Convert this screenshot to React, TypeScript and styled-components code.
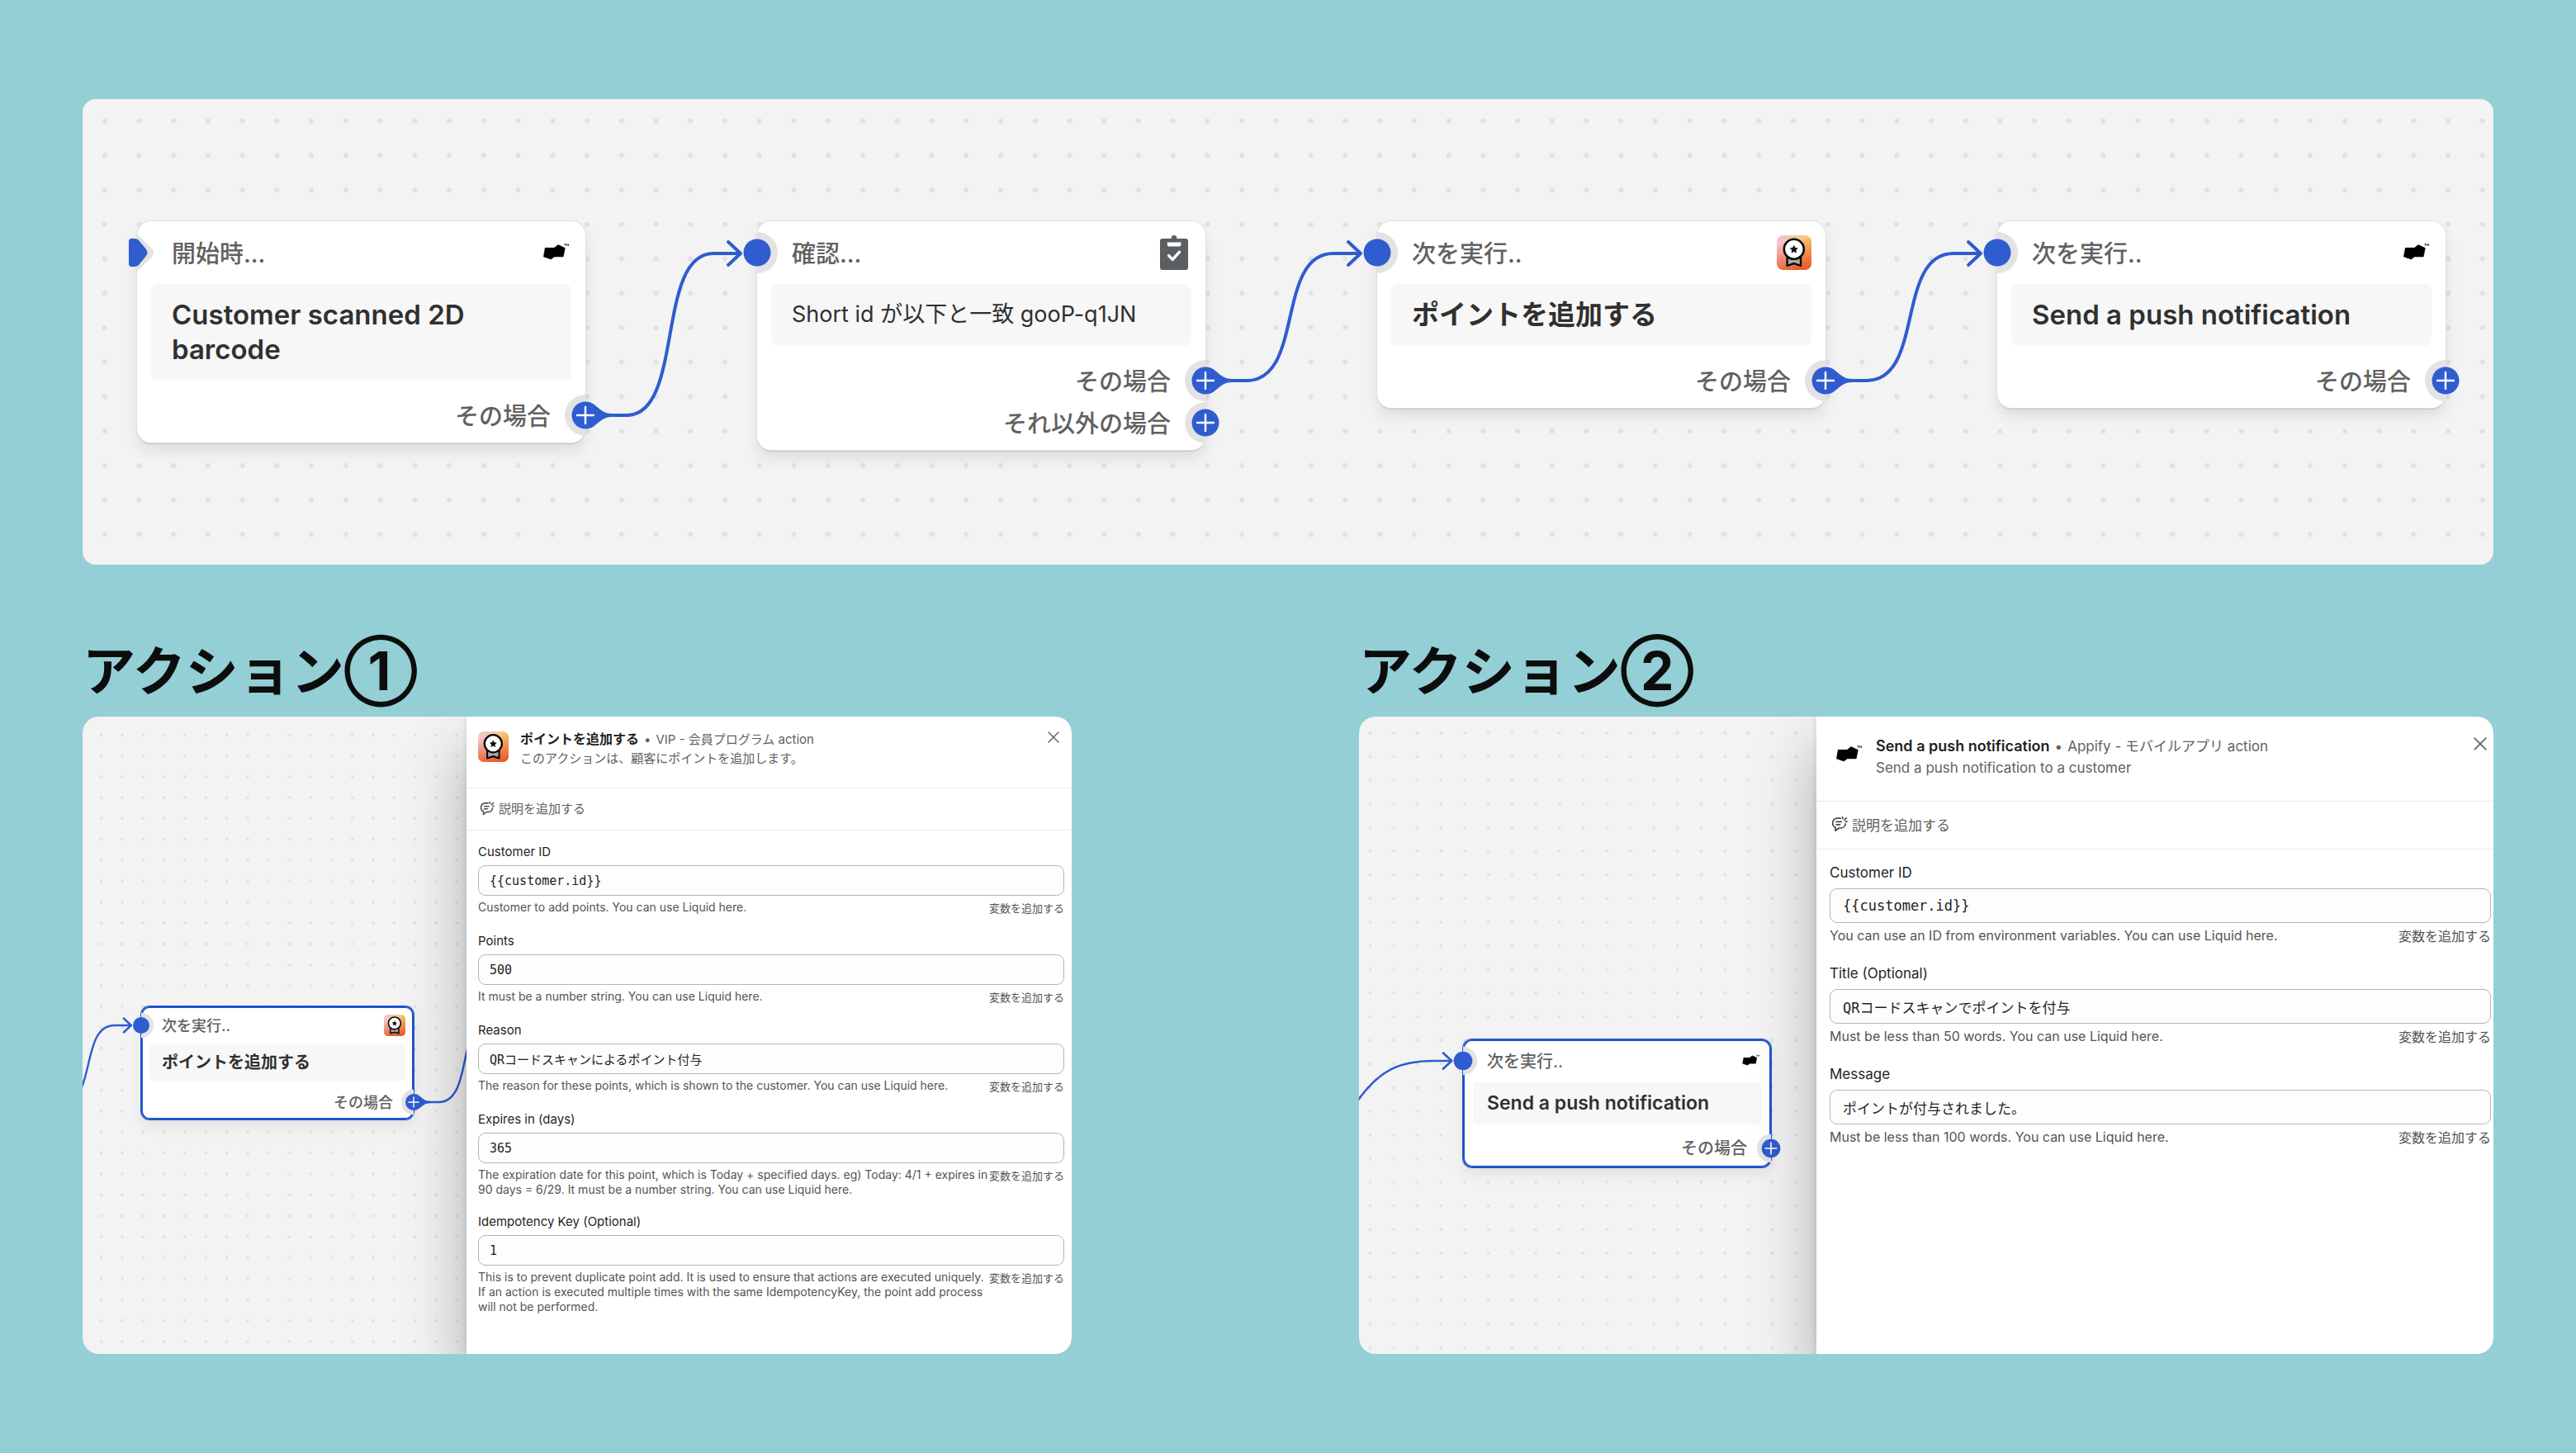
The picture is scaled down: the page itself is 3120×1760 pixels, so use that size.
import React, { useId } from 'react';
import styled, { createGlobalStyle, css } from 'styled-components';

const sans = `Inter, "Noto Sans CJK JP", sans-serif`;
const mono = `"DejaVu Sans Mono", "Noto Sans CJK JP", monospace`;

const color = {
  page: '#93cfd5',
  canvas: '#f3f3f3',
  dot: '#e1e1e1',
  blue: '#2f5ccf',
  selected: '#2253cf',
  ink: '#1f1f1f',
  title: '#303030',
  text: '#616161',
  help: '#545454',
  rule: '#ebebeb',
};

const GlobalStyle = createGlobalStyle`
  *, *::before, *::after { box-sizing: border-box; }
  body { margin: 0; background: ${color.page}; font-family: ${sans}; }
  button { margin: 0; padding: 0; border: 0; background: none; font: inherit; color: inherit; cursor: pointer; }
  h1, h2, h3, p { margin: 0; font-weight: inherit; font-size: inherit; }
  svg { display: block; }
`;

/* ---------- page ---------- */

const Page = styled.main`
  display: flex;
  flex-direction: column;
  min-height: 100vh;
  padding: 120px 100px;
`;

const Canvas = styled.div`
  position: relative;
  overflow: hidden;
  background: ${color.canvas};
`;

const FlowPanel = styled(Canvas).attrs({ as: 'section' })`
  border-radius: 16px;
`;

const FlowRow = styled.div`
  position: relative;
  display: grid;
  grid-template-columns: repeat(4, 1fr);
  align-items: start;
  gap: 208px;
  padding: 148px 58px 139px 66px;
`;

const Actions = styled.div`
  flex: 1;
  display: grid;
  grid-template-columns: 1198fr 1374fr;
  column-gap: 348px;
  margin-top: 85px;
`;

const Action = styled.section`
  display: flex;
  flex-direction: column;
`;

const Heading = styled.h2`
  padding-bottom: 11px;
  font-size: 64px;
  line-height: 88px;
  font-weight: 700;
  color: #0d0d0d;
`;

const Panel = styled.div<{ $columns: string }>`
  flex: 1;
  display: grid;
  grid-template-columns: ${(p) => p.$columns};
  border-radius: 20px;
  overflow: hidden;
`;

/* ---------- dotted canvas ---------- */

const GridSvg = styled.svg`
  position: absolute;
  inset: 0;
  width: 100%;
  height: 100%;
`;

function DotGrid({ zoom, x, y }: { zoom: number; x: number; y: number }) {
  const id = useId();
  const gap = 20 * zoom;
  return (
    <GridSvg aria-hidden="true">
      <pattern id={id} x={x - gap / 2} y={y - gap / 2} width={gap} height={gap} patternUnits="userSpaceOnUse">
        <circle cx={gap / 2} cy={gap / 2} r={1.45 * zoom} fill={color.dot} />
      </pattern>
      <rect width="100%" height="100%" fill={`url(#${id})`} />
    </GridSvg>
  );
}

/* ---------- icons ---------- */

function AppifyIcon({ size }: { size: number }) {
  return (
    <svg width={size} height={size} viewBox="0 0 42 42" aria-hidden="true">
      <path
        d="M10.3 15.3H21.2L26 11.6L34.3 15.4L32.2 25.9H21.4L17.3 28.9L8.4 25.9Z"
        fill="#000"
        stroke="#000"
        strokeWidth=".6"
        strokeLinejoin="round"
      />
      <path d="M33.4 10.6h2.4M34.6 10.6v2.4M36.6 13v-2.4l1 1.4 1-1.4v2.4" fill="none" stroke="#222" strokeWidth=".8" />
    </svg>
  );
}

function BadgeIcon({ size }: { size: number }) {
  const id = useId();
  return (
    <svg width={size} height={size} viewBox="0 0 42 42" aria-hidden="true">
      <defs>
        <linearGradient id={`${id}a`} x1="0" y1="0" x2="1" y2="0">
          <stop offset="0" stopColor="#f4c3d3" />
          <stop offset=".55" stopColor="#f5c9a0" />
          <stop offset="1" stopColor="#f6c766" />
        </linearGradient>
        <linearGradient id={`${id}b`} x1=".35" y1="0" x2=".6" y2="1">
          <stop offset=".15" stopColor="#ea5a2a" stopOpacity="0" />
          <stop offset="1" stopColor="#ea5a2a" />
        </linearGradient>
      </defs>
      <rect width="42" height="42" rx="8" fill={`url(#${id}a)`} />
      <rect width="42" height="42" rx="8" fill={`url(#${id}b)`} />
      <path d="M12.6 24V36.8L20.8 34.2L29 36.8V24Z" fill="#a9a9a9" stroke="#0a0a0a" strokeWidth="2.4" strokeLinejoin="round" />
      <circle cx="20.8" cy="16.8" r="12" fill="#fff" stroke="#0a0a0a" strokeWidth="2.6" />
      <path
        d="M20.8 12.4l1.4 2.9 3.1.4-2.3 2.2.6 3.2-2.8-1.5-2.8 1.5.6-3.2-2.3-2.2 3.1-.4z"
        fill="#0a0a0a"
        stroke="#0a0a0a"
        strokeWidth=".6"
        strokeLinejoin="round"
      />
    </svg>
  );
}

function ClipboardIcon({ size }: { size: number }) {
  return (
    <svg width={size} height={size} viewBox="0 0 42 42" aria-hidden="true">
      <circle cx="21" cy="3.4" r="3.3" fill="#5c5f62" />
      <rect x="4" y="4" width="34" height="38" rx="3" fill="#5c5f62" />
      <path d="M12.8 8.4H29.4V11.4Q29.4 13.4 27.4 13.4H14.8Q12.8 13.4 12.8 11.4Z" fill="#fff" />
      <path d="M14.6 24.6L19.2 29.4L27.6 20.2" fill="none" stroke="#fff" strokeWidth="3.4" strokeLinecap="round" strokeLinejoin="round" />
    </svg>
  );
}

function NoteIcon({ size }: { size: number }) {
  return (
    <svg
      width={size}
      height={size}
      viewBox="0 0 20 20"
      fill="none"
      stroke="#4a4a4a"
      strokeWidth="1.7"
      strokeLinecap="round"
      strokeLinejoin="round"
      aria-hidden="true"
    >
      <path d="M11.2 3.2H7.2A5.8 5.8 0 0 0 5 14.2V18.2L9.2 15H11.6A5.8 5.8 0 0 0 17.3 9.8" />
      <path d="M6.2 7.4H12.2M6.2 10.8H10.4" />
      <path d="M14 3.6L13.6 1.8M16 5.2L18.4 2.8M17.4 7.2H19" />
    </svg>
  );
}

function CloseIcon({ size }: { size: number }) {
  return (
    <svg width={size} height={size} viewBox="0 0 14 14" fill="none" stroke="#5c5f62" strokeWidth="1.4" strokeLinecap="round" aria-hidden="true">
      <path d="M1 1L13 13M13 1L1 13" />
    </svg>
  );
}

/* ---------- flow node ---------- */

type Size = 'lg' | 'md' | 'sm';

const nodeSize = {
  lg: { unit: 1, pad: 17, icon: 42, indent: 25, title: 33, body: 27, label: 29, line: 42, boxTop: 16, boxBottom: 17, row: 51, end: 8, radius: 17, boxRadius: 8 },
  md: { unit: 0.686, pad: 12, icon: 28, indent: 17, title: 23, body: 18, label: 20, line: 29, boxTop: 11, boxBottom: 11, row: 35, end: 6, radius: 11, boxRadius: 5 },
  sm: { unit: 0.607, pad: 10, icon: 26, indent: 15, title: 20, body: 16, label: 18, line: 25, boxTop: 10, boxBottom: 10, row: 31, end: 6, radius: 10, boxRadius: 5 },
};

const Card = styled.article<{ $size: Size; $selected?: boolean }>`
  position: relative;
  padding: ${(p) => nodeSize[p.$size].pad}px;
  padding-bottom: ${(p) => nodeSize[p.$size].end}px;
  border-radius: ${(p) => nodeSize[p.$size].radius}px;
  background: #fff;
  box-shadow: ${(p) =>
    p.$selected
      ? `inset 0 0 0 2px ${color.selected}, 0 0 0 1px ${color.selected}, 0 8px 16px rgba(0, 0, 0, 0.08)`
      : '0 0 0 1px #e0e0e0, 0 2px 1px rgba(0, 0, 0, 0.14), 0 10px 18px rgba(0, 0, 0, 0.09)'};
`;

const CardHeader = styled.header<{ $size: Size }>`
  position: relative;
  display: flex;
  align-items: center;
  justify-content: space-between;
  height: ${(p) => nodeSize[p.$size].icon}px;
  padding-left: ${(p) => nodeSize[p.$size].indent}px;
  font-size: ${(p) => nodeSize[p.$size].label}px;
  font-weight: 500;
  color: ${color.text};
`;

const Caption = styled.span`
  padding-bottom: 2px;
`;

const CardBox = styled.div<{ $size: Size; $plain?: boolean }>`
  margin: ${(p) => nodeSize[p.$size].pad}px 0 ${(p) => nodeSize[p.$size].pad - 1}px;
  padding: ${(p) => {
    const s = nodeSize[p.$size];
    return `${s.boxTop}px ${s.indent}px ${s.boxBottom}px`;
  }};
  border-radius: ${(p) => nodeSize[p.$size].boxRadius}px;
  background: #f7f7f7;
  line-height: ${(p) => nodeSize[p.$size].line}px;
  color: ${color.title};
  ${(p) =>
    p.$plain
      ? css`
          font-size: ${nodeSize[p.$size].body}px;
          font-weight: 400;
        `
      : css`
          font-size: ${nodeSize[p.$size].title}px;
          font-weight: 600;
        `}
`;

const OutputRow = styled.div<{ $size: Size }>`
  position: relative;
  display: flex;
  align-items: center;
  justify-content: flex-end;
  height: ${(p) => nodeSize[p.$size].row}px;
  padding-right: ${(p) => nodeSize[p.$size].indent}px;
  font-size: ${(p) => nodeSize[p.$size].label}px;
  font-weight: 500;
  color: ${color.text};
`;

/* Ports sit on the card's edge, centred on their row. */
const PortAnchor = styled.span<{ $size: Size; $side: 'left' | 'right' }>`
  position: absolute;
  top: 50%;
  ${(p) => p.$side}: -${(p) => nodeSize[p.$size].pad}px;
  width: 0;
  height: 0;
  svg {
    position: absolute;
    left: 0;
    top: 0;
    overflow: visible;
  }
`;

const PlusButton = styled.button`
  position: absolute;
  left: 0;
  top: 0;
`;

function Curve({ rise, tail }: { rise: number; tail?: boolean }) {
  return (
    <g stroke={color.blue} strokeWidth="4" fill="none" strokeLinecap="round" strokeLinejoin="round">
      {tail && <path d="M4 -16C14 -14 18 -2 32 -2V2C18 2 14 14 4 16Z" fill={color.blue} stroke="none" />}
      <path d={`M20 0H50C120 0 85 ${-rise} 155 ${-rise}H187`} />
      <path d={`M173 ${-rise - 14}L188 ${-rise}L173 ${-rise + 14}`} />
    </g>
  );
}

function InputPort({ size, start, lead }: { size: Size; start?: boolean; lead?: React.ReactNode }) {
  const { unit } = nodeSize[size];
  return (
    <PortAnchor $size={size} $side="left">
      <svg width="1" height="1" aria-hidden="true">
        <g transform={`scale(${unit})`}>
          {lead}
          {start ? (
            <>
              <path d="M-1 -24L18 -5Q22 0 18 5L-1 24Z" fill="#e3e3e3" />
              <path d="M-7 -17H-3Q0 -17 2 -15L11 -4Q14 0 11 4L2 15Q0 17 -3 17H-7Q-10 17 -10 13V-13Q-10 -17 -7 -17Z" fill={color.blue} />
            </>
          ) : (
            <>
              <path d="M0 -25A25 25 0 0 1 0 25Z" fill="#e3e3e3" />
              <circle r="16.5" fill={color.blue} />
            </>
          )}
        </g>
      </svg>
    </PortAnchor>
  );
}

function OutputPort({ size, label, rise }: { size: Size; label: string; rise?: number }) {
  const { unit } = nodeSize[size];
  return (
    <PortAnchor $size={size} $side="right">
      <PlusButton type="button" aria-label={label}>
        <svg width="1" height="1" aria-hidden="true">
          <g transform={`scale(${unit})`}>
            <path d="M0 -25A25 25 0 0 0 0 25Z" fill="#e3e3e3" />
            {rise !== undefined && <Curve rise={rise} tail />}
            <circle r="16.5" fill={color.blue} />
            <path d="M-10 0H10M0 -10V10" stroke="#fff" strokeWidth="2.4" strokeLinecap="round" />
          </g>
        </svg>
      </PlusButton>
    </PortAnchor>
  );
}

type NodeProps = {
  size: Size;
  step: string;
  title: string;
  icon: React.ReactNode;
  outputs: { label: string; rise?: number }[];
  plain?: boolean;
  start?: boolean;
  selected?: boolean;
  lead?: React.ReactNode;
};

function FlowNode({ size, step, title, icon, outputs, plain, start, selected, lead }: NodeProps) {
  return (
    <Card $size={size} $selected={selected}>
      <CardHeader $size={size}>
        <InputPort size={size} start={start} lead={lead} />
        <Caption>{step}</Caption>
        {icon}
      </CardHeader>
      <CardBox $size={size} $plain={plain}>
        {title}
      </CardBox>
      {outputs.map((o) => (
        <OutputRow key={o.label} $size={size}>
          <Caption>{o.label}</Caption>
          <OutputPort size={size} label={o.label} rise={o.rise} />
        </OutputRow>
      ))}
    </Card>
  );
}

/* ---------- drawer ---------- */

type Density = 'compact' | 'roomy';

const drawerSize = {
  compact: { top: 16, bottom: 24, left: 14, closeRight: 15, title: 16, meta: 15, line: 23, note: 51, noteIcon: 18, bodyTop: 16, bodyRight: 9, label: 15, labelLine: 20, labelGap: 6, input: 37, inset: 13, mono: 15, helpGap: 5, help: 14, helpLine: 18, link: 13, linkLine: 20, fieldGap: 20, close: 14 },
  roomy: { top: 23, bottom: 27, left: 16, closeRight: 8, title: 18, meta: 17, line: 26, note: 58, noteIcon: 20, bodyTop: 17, bodyRight: 3, label: 17, labelLine: 23, labelGap: 7, input: 42, inset: 15, mono: 17, helpGap: 5, help: 16, helpLine: 20, link: 16, linkLine: 22, fieldGap: 23, close: 16 },
};

type D = { $d: Density };

const Drawer = styled.aside`
  position: relative;
  padding-bottom: 40px;
  background: #fff;
  box-shadow: 0 0 6px rgba(0, 0, 0, 0.12), 0 40px 70px rgba(0, 0, 0, 0.3);
`;

const DrawerHeader = styled.header<D>`
  display: flex;
  align-items: flex-start;
  gap: 14px;
  padding: ${(p) => {
    const s = drawerSize[p.$d];
    return `${s.top}px ${s.closeRight}px ${s.bottom}px ${s.left}px`;
  }};
  border-bottom: 1px solid ${color.rule};
  > svg {
    margin-top: 2px;
  }
`;

const DrawerTitles = styled.div<D>`
  flex: 1;
  font-size: ${(p) => drawerSize[p.$d].meta}px;
  line-height: ${(p) => drawerSize[p.$d].line}px;
  color: ${color.text};
`;

const DrawerTitle = styled.h3<D>`
  display: inline;
  font-size: ${(p) => drawerSize[p.$d].title}px;
  font-weight: 600;
  color: ${color.ink};
`;

const Bullet = styled.span`
  margin: 0 6px;
`;

const CloseButton = styled.button`
  margin-top: 2px;
`;

const NoteRow = styled.button<D>`
  display: flex;
  align-items: center;
  gap: 5px;
  width: 100%;
  height: ${(p) => drawerSize[p.$d].note}px;
  padding: 0 0 3px ${(p) => drawerSize[p.$d].left + 2}px;
  border-bottom: 1px solid ${color.rule};
  font-size: ${(p) => drawerSize[p.$d].label}px;
  color: ${color.text};
`;

const Form = styled.form<D>`
  display: flex;
  flex-direction: column;
  gap: ${(p) => drawerSize[p.$d].fieldGap}px;
  padding: ${(p) => {
    const s = drawerSize[p.$d];
    return `${s.bodyTop}px ${s.bodyRight}px 0 ${s.left}px`;
  }};
`;

const Label = styled.label<D>`
  display: block;
  margin-bottom: ${(p) => drawerSize[p.$d].labelGap}px;
  font-size: ${(p) => drawerSize[p.$d].label}px;
  line-height: ${(p) => drawerSize[p.$d].labelLine}px;
  color: ${color.ink};
`;

const Input = styled.input<D>`
  display: block;
  width: 100%;
  height: ${(p) => drawerSize[p.$d].input}px;
  padding: 0 ${(p) => drawerSize[p.$d].inset}px;
  border: 1px solid #b5b5b5;
  border-radius: 9px;
  background: #fdfdfd;
  font-family: ${mono};
  font-size: ${(p) => drawerSize[p.$d].mono}px;
  color: ${color.ink};
`;

const HelpRow = styled.div<D>`
  display: flex;
  align-items: flex-start;
  justify-content: space-between;
  margin-top: ${(p) => drawerSize[p.$d].helpGap}px;
  font-size: ${(p) => drawerSize[p.$d].help}px;
  line-height: ${(p) => drawerSize[p.$d].helpLine}px;
  color: ${color.help};
`;

const HelpText = styled.p`
  flex: 1;
  margin-right: -2px;
`;

const VariableButton = styled.button<D>`
  flex: none;
  font-size: ${(p) => drawerSize[p.$d].link}px;
  line-height: ${(p) => drawerSize[p.$d].linkLine}px;
`;

type FieldData = { label: string; value: string; help: string };

function Field({ d, field }: { d: Density; field: FieldData }) {
  const id = useId();
  return (
    <div>
      <Label $d={d} htmlFor={id}>
        {field.label}
      </Label>
      <Input $d={d} id={id} type="text" defaultValue={field.value} aria-describedby={`${id}-help`} />
      <HelpRow $d={d}>
        <HelpText id={`${id}-help`}>{field.help}</HelpText>
        <VariableButton $d={d} type="button">
          変数を追加する
        </VariableButton>
      </HelpRow>
    </div>
  );
}

type ActionDrawerProps = {
  d: Density;
  icon: React.ReactNode;
  title: string;
  app: string;
  description: string;
  fields: FieldData[];
};

function ActionDrawer({ d, icon, title, app, description, fields }: ActionDrawerProps) {
  const s = drawerSize[d];
  return (
    <Drawer>
      <DrawerHeader $d={d}>
        {icon}
        <DrawerTitles $d={d}>
          <div>
            <DrawerTitle $d={d}>{title}</DrawerTitle>
            <Bullet>•</Bullet>
            {app}
          </div>
          <p>{description}</p>
        </DrawerTitles>
        <CloseButton type="button" aria-label="閉じる">
          <CloseIcon size={s.close} />
        </CloseButton>
      </DrawerHeader>
      <NoteRow $d={d} type="button">
        <NoteIcon size={s.noteIcon} />
        説明を追加する
      </NoteRow>
      <Form $d={d}>
        {fields.map((f) => (
          <Field key={f.label} d={d} field={f} />
        ))}
      </Form>
    </Drawer>
  );
}

const CanvasNode = styled.div<{ $left: number; $top: number; $width: number }>`
  position: absolute;
  left: ${(p) => p.$left}px;
  top: ${(p) => p.$top}px;
  width: ${(p) => p.$width}px;
`;

/* ---------- data ---------- */

const pointFields: FieldData[] = [
  { label: 'Customer ID', value: '{{customer.id}}', help: 'Customer to add points. You can use Liquid here.' },
  { label: 'Points', value: '500', help: 'It must be a number string. You can use Liquid here.' },
  { label: 'Reason', value: 'QRコードスキャンによるポイント付与', help: 'The reason for these points, which is shown to the customer. You can use Liquid here.' },
  {
    label: 'Expires in (days)',
    value: '365',
    help: 'The expiration date for this point, which is Today + specified days. eg) Today: 4/1 + expires in 90 days = 6/29. It must be a number string. You can use Liquid here.',
  },
  {
    label: 'Idempotency Key (Optional)',
    value: '1',
    help: 'This is to prevent duplicate point add. It is used to ensure that actions are executed uniquely. If an action is executed multiple times with the same IdempotencyKey, the point add process will not be performed.',
  },
];

const pushFields: FieldData[] = [
  { label: 'Customer ID', value: '{{customer.id}}', help: 'You can use an ID from environment variables. You can use Liquid here.' },
  { label: 'Title (Optional)', value: 'QRコードスキャンでポイントを付与', help: 'Must be less than 50 words. You can use Liquid here.' },
  { label: 'Message', value: 'ポイントが付与されました。', help: 'Must be less than 100 words. You can use Liquid here.' },
];

export default function App() {
  return (
    <>
      <GlobalStyle />
      <Page lang="ja">
        <FlowPanel>
          <DotGrid zoom={2.087} x={26.7} y={26.5} />
          <FlowRow>
            <FlowNode
              size="lg"
              start
              step="開始時..."
              title="Customer scanned 2D barcode"
              icon={<AppifyIcon size={42} />}
              outputs={[{ label: 'その場合', rise: 196 }]}
            />
            <FlowNode
              size="lg"
              plain
              step="確認..."
              title="Short id が以下と一致 gooP-q1JN"
              icon={<ClipboardIcon size={42} />}
              outputs={[{ label: 'その場合', rise: 154 }, { label: 'それ以外の場合' }]}
            />
            <FlowNode
              size="lg"
              step="次を実行.."
              title="ポイントを追加する"
              icon={<BadgeIcon size={42} />}
              outputs={[{ label: 'その場合', rise: 154 }]}
            />
            <FlowNode
              size="lg"
              step="次を実行.."
              title="Send a push notification"
              icon={<AppifyIcon size={42} />}
              outputs={[{ label: 'その場合' }]}
            />
          </FlowRow>
        </FlowPanel>

        <Actions>
          <Action>
            <Heading>アクション①</Heading>
            <Panel $columns="465fr 733fr">
              <Canvas>
                <DotGrid zoom={1.267} x={22.6} y={22} />
                <CanvasNode $left={71} $top={351} $width={330}>
                  <FlowNode
                    size="sm"
                    selected
                    step="次を実行.."
                    title="ポイントを追加する"
                    icon={<BadgeIcon size={26} />}
                    outputs={[{ label: 'その場合', rise: 170 }]}
                    lead={
                      <g transform="translate(-208 155)">
                        <Curve rise={155} />
                      </g>
                    }
                  />
                </CanvasNode>
              </Canvas>
              <ActionDrawer
                d="compact"
                icon={<BadgeIcon size={37} />}
                title="ポイントを追加する"
                app="VIP - 会員プログラム action"
                description="このアクションは、顧客にポイントを追加します。"
                fields={pointFields}
              />
            </Panel>
          </Action>

          <Action>
            <Heading>アクション②</Heading>
            <Panel $columns="554fr 820fr">
              <Canvas>
                <DotGrid zoom={1.432} x={13.5} y={19.8} />
                <CanvasNode $left={126} $top={391} $width={373}>
                  <FlowNode
                    size="md"
                    selected
                    step="次を実行.."
                    title="Send a push notification"
                    icon={<AppifyIcon size={28} />}
                    outputs={[{ label: 'その場合' }]}
                    lead={
                      <g stroke={color.blue} strokeWidth="4" fill="none" strokeLinecap="round" strokeLinejoin="round">
                        <path d="M-190 76C-148 14 -110 0 -50 0H-21" />
                        <path d="M-35 -14L-20 0L-35 14" />
                      </g>
                    }
                  />
                </CanvasNode>
              </Canvas>
              <ActionDrawer
                d="roomy"
                icon={<AppifyIcon size={42} />}
                title="Send a push notification"
                app="Appify - モバイルアプリ action"
                description="Send a push notification to a customer"
                fields={pushFields}
              />
            </Panel>
          </Action>
        </Actions>
      </Page>
    </>
  );
}
